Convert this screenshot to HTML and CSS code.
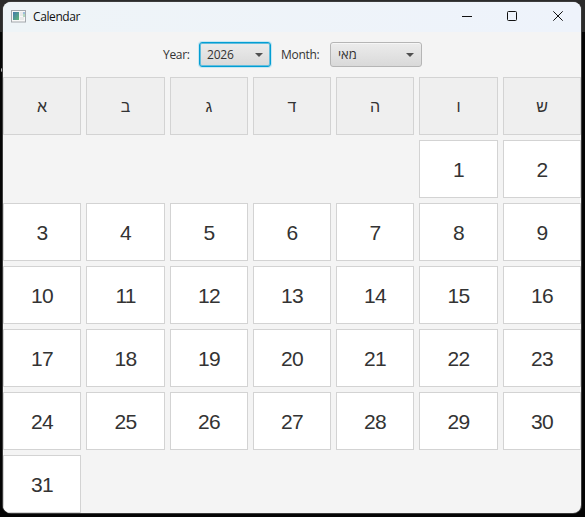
FILE: index.html
```
<!DOCTYPE html>
<html lang="en">
<head>
<meta charset="utf-8">
<title>Calendar</title>
<link rel="stylesheet" href="styles.css">
</head>
<body>
<main class="window">
  <header class="titlebar">
    <svg class="app-icon" width="15" height="13" viewBox="0 0 15 13">
      <defs><linearGradient id="screen" x1="0" y1="0" x2="1" y2="1"><stop offset="0" stop-color="#4379ad"/><stop offset="1" stop-color="#62b879"/></linearGradient></defs>
      <rect x=".5" y=".5" width="14" height="11.5" fill="#f8f8f8" stroke="#a4a8ad"/>
      <rect x="2" y="2" width="6" height="8" fill="url(#screen)"/>
      <path d="M9 2h3v4H9zM9 7h4v3H9z" fill="#e9e9e9"/>
      <path d="M12.5 2h1v2h-1z" fill="#4585bd"/><path d="M12.5 4h1v3h-1z" fill="#70b889"/>
    </svg>
    <span class="title">Calendar</span>
    <svg class="controls" width="104" height="12" viewBox="0 0 104 12" fill="none" stroke="#111">
      <path d="M0 6.5h10"/>
      <rect x="45.5" y="1.5" width="9" height="9" rx="1"/>
      <path d="M91.3 1.3l9.4 9.4M100.7 1.3l-9.4 9.4"/>
    </svg>
  </header>
  <div class="toolbar">
    <span class="label">Year:</span>
    <div class="combo year focused"><span>2026</span><i class="arrow"></i></div>
    <span class="label month-label">Month:</span>
    <div class="combo month"><span class="hebrew">מאי</span><i class="arrow"></i></div>
  </div>
  <section class="grid">
    <div class="day head">א</div><div class="day head">ב</div><div class="day head">ג</div><div class="day head">ד</div><div class="day head">ה</div><div class="day head">ו</div><div class="day head">ש</div>
    <div class="day first">1</div><div class="day">2</div>
    <div class="day">3</div><div class="day">4</div><div class="day">5</div><div class="day">6</div><div class="day">7</div><div class="day">8</div><div class="day">9</div>
    <div class="day">10</div><div class="day">11</div><div class="day">12</div><div class="day">13</div><div class="day">14</div><div class="day">15</div><div class="day">16</div>
    <div class="day">17</div><div class="day">18</div><div class="day">19</div><div class="day">20</div><div class="day">21</div><div class="day">22</div><div class="day">23</div>
    <div class="day">24</div><div class="day">25</div><div class="day">26</div><div class="day">27</div><div class="day">28</div><div class="day">29</div><div class="day">30</div>
    <div class="day">31</div>
  </section>
</main>
</body>
</html>
```
FILE: styles.css
```
* { box-sizing: border-box; }
body {
  margin: 0;
  height: 517px;
  padding: 2px 4px 4px 3px;
  overflow: hidden;
  background:
    radial-gradient(circle at 4px 70px, #bbb 2.5px, transparent 3.5px) 0 0 / 3px 100px no-repeat,
    linear-gradient(#2b2b2b 32px, #050505 32px);
  font-family: "Open Sans", "Noto Sans", sans-serif;
  color: #333;
}
.window {
  width: 578px;
  height: 511px;
  overflow: hidden;
  border-radius: 8px;
  background: #f4f4f4;
  box-shadow: 0 0 0 1px #3c3c3c;
}
.titlebar {
  display: flex;
  align-items: center;
  height: 30px;
  padding: 0 15px 2px 8px;
  background: linear-gradient(90deg, #eef4f7, #eef3fb);
}
.app-icon { margin-right: 7px; }
.title { font-size: 12px; color: #111; letter-spacing: -.4px; }
.controls { margin-left: auto; }
.toolbar {
  display: flex;
  align-items: center;
  height: 45px;
  padding-left: 160px;
  font-size: 12px;
}
.label { width: 36px; letter-spacing: -.3px; }
.month-label { width: 49px; margin-left: 10px; }
.combo {
  display: flex;
  align-items: center;
  justify-content: space-between;
  height: 25px;
  padding: 0 7px;
  border: 1px solid #b5b5b5;
  border-radius: 3px;
  background: linear-gradient(#ececec, #d9d9d9);
  box-shadow: inset 0 1px #f6f6f6;
}
.year { width: 72px; letter-spacing: -.2px; }
.month { width: 92px; }
.focused {
  border-color: #039ed3;
  box-shadow: inset 0 0 0 1px #62bddd, 0 0 0 1px #c5e7f3;
}
.arrow {
  border: 4px solid transparent;
  border-top-color: #505050;
  border-bottom: 0;
}
.grid {
  display: grid;
  grid-template-columns: 78px 79px 78px 78px 78px 79px 78px;
  grid-auto-rows: 58px;
  gap: 5px;
}
.day {
  display: flex;
  align-items: center;
  justify-content: center;
  padding-top: 2px;
  border: 1px solid #d3d3d3;
  background: #fff;
  font: 21px "Liberation Sans", sans-serif;
  letter-spacing: -.8px;
}
.head { background: #efefef; font-size: 16px; letter-spacing: 0; }
.first { grid-column: 6; }
.hebrew { font-size: 13px; line-height: 15px; padding-bottom: 1px; }
```
